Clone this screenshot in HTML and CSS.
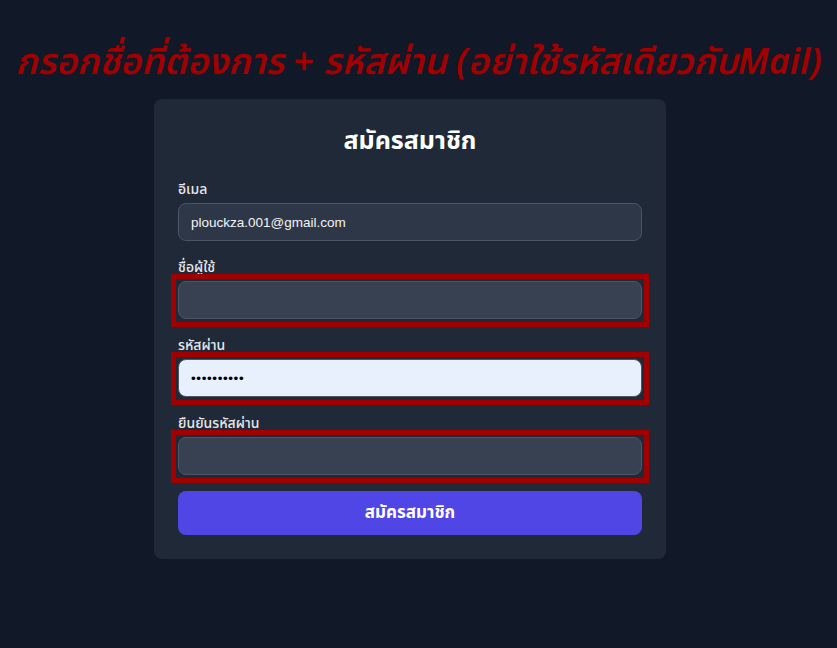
FILE: index.html
```html
<!DOCTYPE html>
<html lang="th">
<head>
<meta charset="utf-8">
<title>สมัครสมาชิก</title>
<link rel="stylesheet" href="styles.css">
</head>
<body>
<h1 class="note">กรอกชื่อที่ต้องการ + รหัสผ่าน (อย่าใช้รหัสเดียวกับMail)</h1>
<div class="page">
<div class="card">
  <h2 class="title">สมัครสมาชิก</h2>
  <form class="form">
    <div class="field">
      <label class="label">อีเมล</label>
      <input class="input input-email" type="email" value="plouckza.001@gmail.com">
    </div>
    <div class="field">
      <label class="label">ชื่อผู้ใช้</label>
      <div class="mark"><input class="input" type="text"></div>
    </div>
    <div class="field">
      <label class="label">รหัสผ่าน</label>
      <div class="mark"><input class="input input-filled" type="password" value="abcdefghij"></div>
    </div>
    <div class="field">
      <label class="label">ยืนยันรหัสผ่าน</label>
      <div class="mark"><input class="input" type="password"></div>
    </div>
    <button class="btn" type="button">สมัครสมาชิก</button>
  </form>
</div>
</div>
</body>
</html>
```
FILE: styles.css
```css
* { box-sizing: border-box; }
html, body { margin: 0; padding: 0; }
body {
  background: #111827;
  font-family: "Noto Sans", "Noto Sans Thai", "Noto Sans Thai UI", sans-serif;
  color: #f9fafb;
  height: 648px;
}
.note {
  margin: 0;
  padding-top: 38px;
  height: 99px;
  text-align: center;
  font-size: 36px;
  line-height: 46px;
  font-style: italic;
  font-weight: 600;
  color: #a00000;
  white-space: nowrap;
}
.page { padding-right: 17px; }
.card {
  width: 512px;
  margin: 0 auto;
  background: #1f2937;
  border-radius: 8px;
  padding: 24px;
}
.title {
  margin: 0 0 24px;
  text-align: center;
  font-size: 25px;
  line-height: 32px;
  font-weight: 700;
  color: #ffffff;
}
.form { display: flex; flex-direction: column; gap: 16px; }
.field { display: flex; flex-direction: column; }
.label {
  font-size: 14px;
  line-height: 20px;
  margin-bottom: 4px;
  color: #e5e7eb;
  font-weight: 500;
}
.input {
  display: block;
  width: 100%;
  height: 38px;
  padding: 8px 12px;
  border: 1px solid #4b5563;
  border-radius: 8px;
  background: #374151;
  color: #f3f4f6;
  font-family: "Liberation Sans", Arial, sans-serif;
  font-size: 13.5px;
  line-height: 20px;
  outline: none;
}
.input-email { background: #2e3747; }
.input-filled { background: #e8f0fe; color: #000; letter-spacing: 0.6px; }
.mark {
  border: 5px solid #a00000;
  padding: 2px 2px 3px;
  margin: -7px -7px -8px;
}
.btn {
  height: 44px;
  border: none;
  border-radius: 8px;
  background: #4f46e5;
  color: #ffffff;
  font-family: "Noto Sans", "Noto Sans Thai", sans-serif;
  font-size: 17px;
  font-weight: 700;
}
```
